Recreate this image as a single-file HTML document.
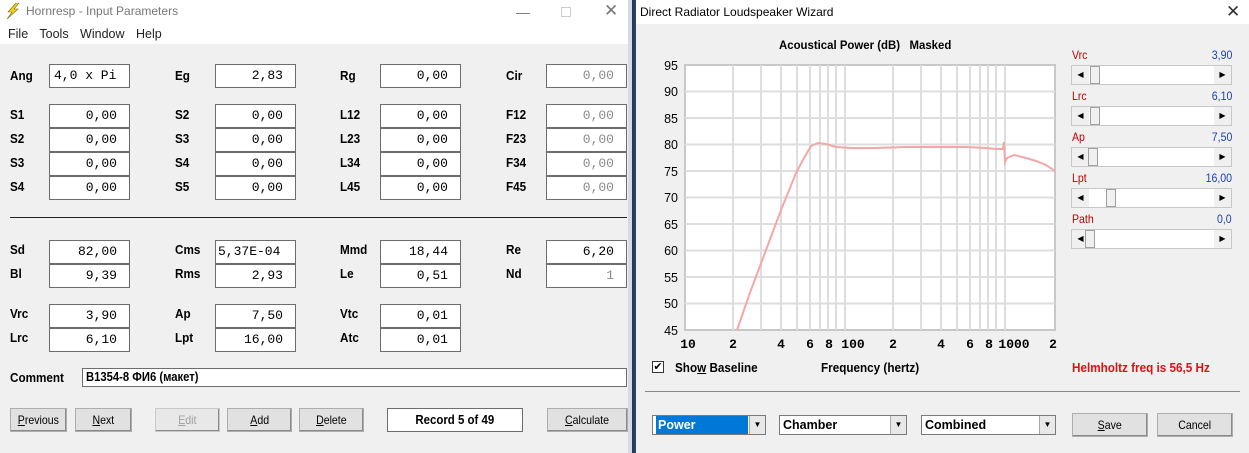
<!DOCTYPE html>
<html><head><meta charset="utf-8"><style>
*{margin:0;padding:0;box-sizing:border-box}
body{width:1249px;height:453px;overflow:hidden;background:#f0f0f0;font-family:"Liberation Sans",sans-serif;position:relative}
.a{position:absolute}
.lbl{position:absolute;font-weight:bold;font-size:13px;transform:scaleX(.9);transform-origin:left;color:#000}
.box{position:absolute;width:81px;height:24px;background:#fff;border:1px solid #6d6d6d;font-family:"Liberation Mono",monospace;font-size:13px;text-align:right;padding-right:12px;line-height:22px;color:#000}
.dis{color:#8a8a8a}
.btn{position:absolute;top:408px;height:24px;background:#e1e1e1;border:1px solid #adadad;box-shadow:inset -1px -1px 0 #8a8a8a;font-size:12px;text-align:center;line-height:22px}
.btn span{display:inline-block;transform:scaleX(.88)}
.sl{position:absolute;left:1071px;width:161px;height:20px;background:#fff;border:1px solid #c8c8c8}
.sl .ar{position:absolute;top:0;width:17px;height:18px;background:#f0f0f0;font-size:8px;line-height:18px;text-align:center}
.sl .th{position:absolute;top:0;width:10px;height:18px;background:#f0f0f0;border:1px solid #a0a0a0}
.sn{position:absolute;left:1072px;font-size:12px;color:#c00000;transform:scaleX(.88);transform-origin:left}
.sv{position:absolute;right:17px;font-size:12px;color:#1c3fb5;transform:scaleX(.88);transform-origin:right}
.cb{position:absolute;top:415px;height:20px;background:#fff;border:1px solid #7a7a7a;font-weight:bold;font-size:12.5px;line-height:18px;padding-left:3px}
.cb .dd{position:absolute;right:0;top:0;width:16px;height:18px;background:#e8e8e8;border-left:1px solid #aaa;font-size:8px;text-align:center;line-height:18px}
</style></head><body>
<div class="a" style="left:0;top:0;width:632px;height:44px;background:#fff"></div>
<div class="a" style="left:628px;top:0;width:4px;height:453px;background:#d4dbe6"></div>
<div class="a" style="left:632px;top:0;width:2px;height:453px;background:#2a3a4e"></div>
<div class="a" style="left:634px;top:0;width:2px;height:453px;background:#2d4363"></div>
<svg class="a" style="left:6px;top:3px" width="14" height="16"><polygon points="10,0 2,9 6,9 1,16 12,6 8,6 13,0" fill="#f2d21b" stroke="#7a6a10" stroke-width=".6"/></svg>
<div class="a" style="left:26px;top:4px;font-size:12px;color:#777">Hornresp - Input Parameters</div>
<div class="a" style="left:516px;top:4px;font-size:14px;color:#777">—</div>
<div class="a" style="left:561px;top:7px;width:10px;height:10px;border:1px solid #ccc"></div>
<div class="a" style="left:604px;top:1px;font-size:17px;color:#777">✕</div>
<div class="a" style="left:8px;top:27px;font-size:12.5px;color:#222;word-spacing:8px">File Tools Window Help</div>

<div class="lbl" style="left:10px;top:68px">Ang</div>
<div class="box" style="left:49px;top:64px;text-align:left;padding-left:4px">4,0 x Pi</div>
<div class="lbl" style="left:175px;top:68px">Eg</div><div class="box" style="left:215px;top:64px">2,83</div>
<div class="lbl" style="left:340px;top:68px">Rg</div><div class="box" style="left:380px;top:64px">0,00</div>
<div class="lbl" style="left:506px;top:68px">Cir</div><div class="box dis" style="left:546px;top:64px">0,00</div>

<div class="lbl" style="left:10px;top:107px">S1</div><div class="box" style="left:49px;top:104px">0,00</div>
<div class="lbl" style="left:175px;top:107px">S2</div><div class="box" style="left:215px;top:104px">0,00</div>
<div class="lbl" style="left:340px;top:107px">L12</div><div class="box" style="left:380px;top:104px">0,00</div>
<div class="lbl" style="left:506px;top:107px">F12</div><div class="box dis" style="left:546px;top:104px">0,00</div>
<div class="lbl" style="left:10px;top:131px">S2</div><div class="box" style="left:49px;top:128px">0,00</div>
<div class="lbl" style="left:175px;top:131px">S3</div><div class="box" style="left:215px;top:128px">0,00</div>
<div class="lbl" style="left:340px;top:131px">L23</div><div class="box" style="left:380px;top:128px">0,00</div>
<div class="lbl" style="left:506px;top:131px">F23</div><div class="box dis" style="left:546px;top:128px">0,00</div>
<div class="lbl" style="left:10px;top:155px">S3</div><div class="box" style="left:49px;top:152px">0,00</div>
<div class="lbl" style="left:175px;top:155px">S4</div><div class="box" style="left:215px;top:152px">0,00</div>
<div class="lbl" style="left:340px;top:155px">L34</div><div class="box" style="left:380px;top:152px">0,00</div>
<div class="lbl" style="left:506px;top:155px">F34</div><div class="box dis" style="left:546px;top:152px">0,00</div>
<div class="lbl" style="left:10px;top:179px">S4</div><div class="box" style="left:49px;top:176px">0,00</div>
<div class="lbl" style="left:175px;top:179px">S5</div><div class="box" style="left:215px;top:176px">0,00</div>
<div class="lbl" style="left:340px;top:179px">L45</div><div class="box" style="left:380px;top:176px">0,00</div>
<div class="lbl" style="left:506px;top:179px">F45</div><div class="box dis" style="left:546px;top:176px">0,00</div>

<div class="a" style="left:10px;top:217px;width:617px;height:1px;background:#222"></div>

<div class="lbl" style="left:10px;top:242px">Sd</div><div class="box" style="left:49px;top:240px">82,00</div>
<div class="lbl" style="left:175px;top:242px">Cms</div><div class="box" style="left:215px;top:240px;text-align:left;padding-left:2px">5,37E-04</div>
<div class="lbl" style="left:340px;top:242px">Mmd</div><div class="box" style="left:380px;top:240px">18,44</div>
<div class="lbl" style="left:506px;top:242px">Re</div><div class="box" style="left:546px;top:240px">6,20</div>
<div class="lbl" style="left:10px;top:266px">Bl</div><div class="box" style="left:49px;top:264px">9,39</div>
<div class="lbl" style="left:175px;top:266px">Rms</div><div class="box" style="left:215px;top:264px">2,93</div>
<div class="lbl" style="left:340px;top:266px">Le</div><div class="box" style="left:380px;top:264px">0,51</div>
<div class="lbl" style="left:506px;top:266px">Nd</div><div class="box dis" style="left:546px;top:264px">1</div>

<div class="lbl" style="left:10px;top:306px">Vrc</div><div class="box" style="left:49px;top:304px">3,90</div>
<div class="lbl" style="left:175px;top:306px">Ap</div><div class="box" style="left:215px;top:304px">7,50</div>
<div class="lbl" style="left:340px;top:306px">Vtc</div><div class="box" style="left:380px;top:304px">0,01</div>
<div class="lbl" style="left:10px;top:330px">Lrc</div><div class="box" style="left:49px;top:328px">6,10</div>
<div class="lbl" style="left:175px;top:330px">Lpt</div><div class="box" style="left:215px;top:328px">16,00</div>
<div class="lbl" style="left:340px;top:330px">Atc</div><div class="box" style="left:380px;top:328px">0,01</div>

<div class="lbl" style="left:10px;top:370px">Comment</div>
<div class="a" style="left:82px;top:368px;width:545px;height:19px;background:#fff;border:1px solid #6d6d6d"></div>
<div class="lbl" style="left:86px;top:370px;font-size:12.5px">B1354-8 ФИ6 (макет)</div>

<div class="btn" style="left:10px;width:57px"><span><u>P</u>revious</span></div>
<div class="btn" style="left:75px;width:57px"><span><u>N</u>ext</span></div>
<div class="btn" style="left:155px;width:65px;color:#a0a0a0;background:#e8e8e8;border-color:#c8c8c8"><span><u>E</u>dit</span></div>
<div class="btn" style="left:227px;width:65px"><span><u>A</u>dd</span></div>
<div class="btn" style="left:299px;width:65px"><span><u>D</u>elete</span></div>
<div class="a" style="left:387px;top:408px;width:136px;height:24px;background:#fff;border:1px solid #6d6d6d;font-weight:bold;font-size:13px;text-align:center;line-height:22px"><span style="display:inline-block;transform:scaleX(.88)">Record 5 of 49</span></div>
<div class="btn" style="left:547px;width:81px"><span><u>C</u>alculate</span></div>

<div class="a" style="left:636px;top:0;width:613px;height:24px;background:#fff"></div>
<div class="a" style="left:640px;top:5px;font-size:12px;color:#000">Direct Radiator Loudspeaker Wizard</div>
<div class="a" style="left:1226px;top:2px;font-size:17px;color:#333">✕</div>
<div class="a" style="left:779px;top:38px;font-weight:bold;font-size:12px;transform:scaleX(.95);transform-origin:left;white-space:pre">Acoustical Power (dB)   Masked</div>

<svg class="a" style="left:636px;top:0" width="613" height="453">
<rect x="49" y="65" width="370" height="265" fill="#fff" stroke="#c8c8c8" stroke-width="2"/>
<g stroke="#dedede" stroke-width="2">
<line x1="49" x2="419" y1="91.5" y2="91.5"/><line x1="49" x2="419" y1="118" y2="118"/><line x1="49" x2="419" y1="144.5" y2="144.5"/><line x1="49" x2="419" y1="171" y2="171"/><line x1="49" x2="419" y1="197.5" y2="197.5"/><line x1="49" x2="419" y1="224" y2="224"/><line x1="49" x2="419" y1="250.5" y2="250.5"/><line x1="49" x2="419" y1="277" y2="277"/><line x1="49" x2="419" y1="303.5" y2="303.5"/>
<line y1="65" y2="330" x1="97" x2="97"/><line y1="65" y2="330" x1="125" x2="125"/><line y1="65" y2="330" x1="145" x2="145"/><line y1="65" y2="330" x1="161" x2="161"/><line y1="65" y2="330" x1="174" x2="174"/><line y1="65" y2="330" x1="184" x2="184"/><line y1="65" y2="330" x1="192" x2="192"/><line y1="65" y2="330" x1="200" x2="200"/><line y1="65" y2="330" x1="209" x2="209"/>
<line y1="65" y2="330" x1="257" x2="257"/><line y1="65" y2="330" x1="285" x2="285"/><line y1="65" y2="330" x1="305" x2="305"/><line y1="65" y2="330" x1="321" x2="321"/><line y1="65" y2="330" x1="334" x2="334"/><line y1="65" y2="330" x1="344" x2="344"/><line y1="65" y2="330" x1="352" x2="352"/><line y1="65" y2="330" x1="360" x2="360"/><line y1="65" y2="330" x1="369" x2="369"/>
</g>
<polyline fill="none" stroke="#f2a8a8" stroke-width="2" points="101,330 115,290 130,250 145,210 160,173 168,158 175,146 182,143 190,144 200,147 215,148 240,148 270,147 300,147 330,147 350,148 360,149 367,149 368,142 369,162 371,158 378,155 390,158 400,161 410,165 419,171"/>
<g font-family="Liberation Sans,sans-serif" font-size="12.5" fill="#000">
<text x="42" y="70" text-anchor="end">95</text><text x="42" y="96" text-anchor="end">90</text><text x="42" y="123" text-anchor="end">85</text><text x="42" y="149" text-anchor="end">80</text><text x="42" y="176" text-anchor="end">75</text><text x="42" y="202" text-anchor="end">70</text><text x="42" y="229" text-anchor="end">65</text><text x="42" y="255" text-anchor="end">60</text><text x="42" y="282" text-anchor="end">55</text><text x="42" y="308" text-anchor="end">50</text><text x="42" y="335" text-anchor="end">45</text>
</g>
<g font-family="Liberation Mono,monospace" font-size="13" font-weight="bold" fill="#000" text-anchor="middle">
<text x="52" y="348">10</text><text x="97" y="348">2</text><text x="145" y="348">4</text><text x="174" y="348">6</text><text x="193" y="348">8</text><text x="217" y="348">100</text><text x="257" y="348">2</text><text x="305" y="348">4</text><text x="334" y="348">6</text><text x="353" y="348">8</text><text x="378" y="348">1000</text><text x="417" y="348">2</text>
</g>
</svg>

<div class="sn" style="top:48px">Vrc</div><div class="sv" style="top:48px">3,90</div>
<div class="sl" style="top:65px"><div class="ar" style="left:0">◀</div><div class="th" style="left:18px"></div><div class="ar" style="right:0">▶</div></div>
<div class="sn" style="top:89px">Lrc</div><div class="sv" style="top:89px">6,10</div>
<div class="sl" style="top:106px"><div class="ar" style="left:0">◀</div><div class="th" style="left:18px"></div><div class="ar" style="right:0">▶</div></div>
<div class="sn" style="top:130px">Ap</div><div class="sv" style="top:130px">7,50</div>
<div class="sl" style="top:147px"><div class="ar" style="left:0">◀</div><div class="th" style="left:16px"></div><div class="ar" style="right:0">▶</div></div>
<div class="sn" style="top:171px">Lpt</div><div class="sv" style="top:171px">16,00</div>
<div class="sl" style="top:188px"><div class="ar" style="left:0">◀</div><div class="th" style="left:34px"></div><div class="ar" style="right:0">▶</div></div>
<div class="sn" style="top:212px">Path</div><div class="sv" style="top:212px">0,0</div>
<div class="sl" style="top:229px"><div class="ar" style="left:0">◀</div><div class="th" style="left:13px"></div><div class="ar" style="right:0">▶</div></div>

<div class="a" style="left:652px;top:361px;width:12px;height:12px;border:1px solid #333;background:#fff;font-size:11px;line-height:10px;text-align:center">✔</div>
<div class="lbl" style="left:675px;top:360px">Sho<u>w</u> Baseline</div>
<div class="lbl" style="left:821px;top:360px">Frequency (hertz)</div>
<div class="lbl" style="left:1072px;top:360px;color:#e01010">Helmholtz freq is 56,5 Hz</div>
<div class="a" style="left:645px;top:391px;width:595px;height:1px;background:#888"></div>

<div class="cb" style="left:652px;width:114px"><span style="background:#0078d7;color:#fff;padding:0 2px;display:inline-block;width:92px">Power</span><div class="dd">▼</div></div>
<div class="cb" style="left:779px;width:128px">Chamber<div class="dd">▼</div></div>
<div class="cb" style="left:921px;width:135px">Combined<div class="dd">▼</div></div>
<div class="btn" style="left:1072px;top:413px;width:76px"><span><u>S</u>ave</span></div>
<div class="btn" style="left:1157px;top:413px;width:76px"><span>Cancel</span></div>
</body></html>
